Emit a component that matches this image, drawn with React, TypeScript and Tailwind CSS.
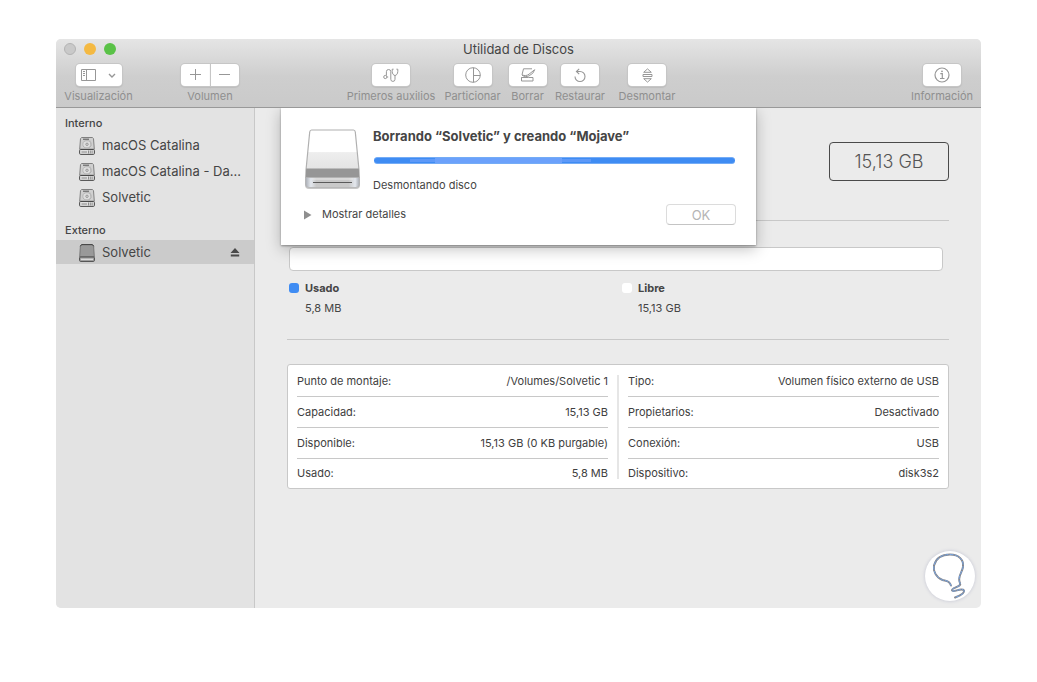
import React from "react";

type ToolProps = { id: string; label: string; width: string; children: React.ReactNode };

const buttonFace =
  "flex h-[22px] items-center justify-center bg-white text-[#979797] shadow-[0_0_0_1px_#c6c6c6,0_1px_1px_1px_#bdbdbd]";

function Tool({ id, label, width, children }: ToolProps) {
  return (
    <div className={`flex flex-col items-center ${width}`}>
      <button type="button" aria-labelledby={id} className={`${buttonFace} w-[38px] rounded`}>
        {children}
      </button>
      <ToolLabel id={id}>{label}</ToolLabel>
    </div>
  );
}

function ToolLabel({ id, children }: { id: string; children: React.ReactNode }) {
  return (
    <span id={id} className="mt-[3px] whitespace-nowrap text-[11px] leading-[14px] text-[#8f8f8f]">
      {children}
    </span>
  );
}

function InternalDisk() {
  return (
    <svg width="16" height="18" viewBox="0 0 16 18" fill="none" className="shrink-0" aria-hidden="true">
      <path d="M2.5.5h11l1 1.2.8 10.5H.7L1.5 1.7z" fill="#d0d0d0" stroke="#808080" />
      <path d="M4 2.2h6" stroke="#555" />
      <ellipse cx="8" cy="7.3" rx="4.2" ry="3.6" fill="#dedede" stroke="#b4b4b4" />
      <circle cx="8" cy="7.3" r="1.2" fill="#ddd" stroke="#888" strokeWidth=".8" />
      <path d="M11 3.5 12 9 9.5 10.6" stroke="#b4b4b4" strokeWidth=".8" />
      <rect x=".6" y="12.500" width="14.8" height="4.900" rx="1" fill="#e0e0e0" stroke="#4a4a4a" />
      <path d="M2.500 15h5.500M9.5 13.500v3M11.3 13.500v3M13.1 13.500v3" stroke="#777" strokeWidth=".8" />
    </svg>
  );
}

function ExternalDisk() {
  return (
    <svg width="16" height="18" viewBox="0 0 16 18" fill="none" className="shrink-0" aria-hidden="true">
      <path d="M2.6.6h10.8l1.2 1.4.7 11H.7l.7-11z" fill="#999" stroke="#777" />
      <path d="M1.3 2.2 2.6.6h10.8l1.3 1.6" stroke="#444" />
      <rect x=".6" y="13" width="14.8" height="4.4" rx="1" fill="#a8a8a8" stroke="#4a4a4a" />
      <path d="M2 15.3h12" stroke="#e6e6e6" />
    </svg>
  );
}

function LargeDisk() {
  return (
    <svg width="58" height="62" viewBox="0 0 58 62" fill="none" className="shrink-0" aria-hidden="true">
      <defs>
        <linearGradient id="base" x1="0" x2="1" y1="0" y2="0">
          <stop offset="0" stopColor="#a7abb2" />
          <stop offset=".1" stopColor="#e4e8ee" />
          <stop offset=".2" stopColor="#c9c9c9" />
          <stop offset=".8" stopColor="#c9c9c9" />
          <stop offset=".92" stopColor="#e4e8ee" />
          <stop offset="1" stopColor="#a7abb2" />
        </linearGradient>
        <linearGradient id="top" x1="0" x2="0" y1="0" y2="1">
          <stop offset=".45" stopColor="#fff" />
          <stop offset=".47" stopColor="#eeeeee" />
          <stop offset="1" stopColor="#dedede" />
        </linearGradient>
      </defs>
      <path d="M1 51h55v6q0 4-4 4H5q-4 0-4-4z" fill="#c8c8c8" />
      <path d="M7.500 2h42q1.500 0 1.800 2L55 42v8H2v-8L5.700 4Q6 2 7.500 2z" fill="url(#top)" stroke="#b0b0b0" strokeWidth="1.200" />
      <path d="M2.200 40.500h52.600l.7 9.500H1.500z" fill="#969696" />
      <path d="M1.500 49.500h54v6.500q0 3.500-3.500 3.500H5q-3.500 0-3.500-3.500z" fill="url(#base)" stroke="#b4b4b4" strokeWidth=".8" />
      <path d="M8 51h41" stroke="#eaeaea" />
      <path d="M9 54.500h39" stroke="#5a5a5a" />
    </svg>
  );
}

function SidebarItem({ name }: { name: string }) {
  return (
    <li>
      <button type="button" className="flex h-[26px] w-full items-center gap-[7px] whitespace-nowrap pl-[23px] text-left text-[13px]">
        <InternalDisk />
        <span>{name}</span>
      </button>
    </li>
  );
}

function InfoTable({ label, rows }: { label: string; rows: [string, string][] }) {
  return (
    <table aria-label={label} className="w-full border-separate border-spacing-0 text-[11px] text-[#404040]">
      <tbody>
        {rows.map(([name, value], i) => {
          const cell = i < rows.length - 1 ? "h-[31px] border-b border-[#c8c8c8] p-0" : "h-[29px] p-0";
          return (
            <tr key={name}>
              <th scope="row" className={`${cell} text-left font-normal`}>{name}</th>
              <td className={`${cell} text-right`}>{value}</td>
            </tr>
          );
        })}
      </tbody>
    </table>
  );
}

export default function App() {
  return (
    <div className="min-h-screen bg-white px-14 pb-[74px] pt-[39px] font-['Inter',sans-serif] text-[#454545]">
      <div className="relative flex min-h-[569px] flex-col overflow-hidden rounded-[5px] bg-[#ebebeb]">
        <header className="h-[69px] border-b border-[#999] bg-linear-to-b from-[#e5e5e5] via-[#cecece] via-55% to-[#cacaca]">
          <div className="grid h-[25px] grid-cols-[1fr_auto_1fr] items-start px-2 pt-1">
            <div className="flex gap-2">
              <button type="button" aria-label="Cerrar" className="size-3 rounded-full border border-[#b3b3b3] bg-[#c9c9c9]" />
              <button type="button" aria-label="Minimizar" className="size-3 rounded-full bg-[#f4b942]" />
              <button type="button" aria-label="Ampliar" className="size-3 rounded-full bg-[#5ac247]" />
            </div>
            <h1 className="text-[13px] leading-[13px]">Utilidad de Discos</h1>
          </div>
          <div className="flex items-start px-2">
            <div className="flex w-[69px] flex-col items-center">
              <button type="button" aria-labelledby="t-view" className={`${buttonFace} w-[46px] gap-3 rounded`}>
                <svg width="15" height="12" viewBox="0 0 15 12" fill="none" stroke="currentColor" aria-hidden="true">
                  <path d="M.5.5h14v11H.5zM5.500.5v11M2 2.500h2M2 4.500h2M2 6.500h2" />
                </svg>
                <svg width="8" height="5" viewBox="0 0 8 5" fill="none" stroke="currentColor" strokeWidth="1.400" aria-hidden="true">
                  <path d="m1 1 3 3 3-3" />
                </svg>
              </button>
              <ToolLabel id="t-view">Visualización</ToolLabel>
            </div>
            <div className="ml-[47px] flex w-[60px] flex-col items-center">
              <div role="group" aria-labelledby="t-volume" className="flex w-[58px] gap-px">
                <button type="button" aria-label="Añadir volumen" className={`${buttonFace} flex-1 rounded-l`}>
                  <svg width="12" height="12" viewBox="0 0 12 12" fill="none" stroke="currentColor" aria-hidden="true">
                    <path d="M1 5.500h11M6.500 0v11" />
                  </svg>
                </button>
                <button type="button" aria-label="Eliminar volumen" className={`${buttonFace} flex-1 rounded-r`}>
                  <svg width="12" height="12" viewBox="0 0 12 12" fill="none" stroke="currentColor" aria-hidden="true">
                    <path d="M0 5.500h11" />
                  </svg>
                </button>
              </div>
              <ToolLabel id="t-volume">Volumen</ToolLabel>
            </div>
            <div className="ml-[106px] flex gap-2">
              <Tool id="t-aid" label="Primeros auxilios" width="w-[90px]">
                <svg width="16" height="15" viewBox="0 0 16 15" fill="none" stroke="currentColor" strokeWidth="1" aria-hidden="true">
                  <circle cx="2.300" cy="9" r="1.600" />
                  <path d="M3.900 9h1.300M3.400 7.600V3.700a2.200 2.200 0 0 1 4.400 0v7.600a2.100 2.100 0 0 0 4.200 0V7.500M10.600 1.200H9.200v2.300c0 2.300 1.500 4 2.800 4s2.800-1.700 2.800-4V1.200h-1.400" />
                </svg>
              </Tool>
              <Tool id="t-partition" label="Particionar" width="w-[57px]">
                <svg width="16" height="16" viewBox="0 0 16 16" fill="none" stroke="currentColor" aria-hidden="true">
                  <circle cx="8" cy="8" r="7.300" />
                  <path d="M8.500.7v14.600M8 8.500h7.300" />
                </svg>
              </Tool>
              <Tool id="t-erase" label="Borrar" width="w-[37px]">
                <svg width="16" height="14" viewBox="0 0 16 14" fill="none" stroke="currentColor" aria-hidden="true">
                  <path d="M12 .8H3.500L2 6.800c2.500 1.200 5 1 7-.6l5.500-4.400M14.800 1.600l-2 3.600-3.600 2.600c-2.400 1.300-5 1-7.200-.6" />
                  <path d="M1.500 9.500h4M8.500 9.500h4.500v3.500H1.500V9.500h7" />
                </svg>
              </Tool>
              <Tool id="t-restore" label="Restaurar" width="w-[52px]">
                <svg width="14" height="15" viewBox="0 0 14 15" fill="none" stroke="currentColor" strokeWidth="1.100" aria-hidden="true">
                  <path d="M2 8.500a5 5 0 1 0 5-5H3.500M6.200.8 3.400 3.500l2.800 2.700" />
                </svg>
              </Tool>
              <Tool id="t-unmount" label="Desmontar" width="w-[66px]">
                <svg width="11" height="15" viewBox="0 0 11 15" fill="none" stroke="currentColor" aria-hidden="true">
                  <path d="M1.700 4.300 5.500.9l3.800 3.400zM1.700 10.700l3.800 3.400 3.800-3.400zM1 6.500h9v2H1z" />
                </svg>
              </Tool>
            </div>
            <div className="ml-auto">
              <Tool id="t-info" label="Información" width="w-[62px]">
                <svg width="16" height="16" viewBox="0 0 16 16" fill="none" stroke="currentColor" strokeWidth="1.200" aria-hidden="true">
                  <circle cx="8" cy="8" r="7" />
                  <path d="M6.300 6.700h2v4.800M6 11.500h4.500" />
                  <circle cx="8" cy="4.300" r=".9" fill="currentColor" stroke="none" />
                </svg>
              </Tool>
            </div>
          </div>
        </header>

        <div className="relative flex flex-1">
          <nav aria-label="Discos" className="w-[199px] shrink-0 border-r border-[#c8c8c8] bg-[#e3e3e3] pt-1.5">
            <h2 className="pl-[9px] text-[11px] font-medium leading-[18px]">Interno</h2>
            <ul className="pt-px">
              <SidebarItem name="macOS Catalina" />
              <SidebarItem name="macOS Catalina - Da..." />
              <SidebarItem name="Solvetic" />
            </ul>
            <h2 className="mb-px mt-2.5 pl-[9px] text-[11px] font-medium leading-[18px]">Externo</h2>
            <div className="flex h-6 items-center bg-[#cbcbcb] pl-[23px] pr-[14px] pt-px">
              <button type="button" aria-current="true" className="flex flex-1 items-center gap-[7px] text-left text-[13px]">
                <ExternalDisk />
                Solvetic
              </button>
              <button type="button" aria-label="Expulsar Solvetic">
                <svg width="10" height="9" viewBox="0 0 10 9" fill="#4a4a4a" aria-hidden="true">
                  <path d="M5 0l4.500 5h-9zM.8 6.500h8.400V8.500H.8z" />
                </svg>
              </button>
            </div>
          </nav>

          <main className="min-w-0 flex-1 px-8">
            <div className="flex justify-end border-b border-[#c8c8c8] pb-[39px] pt-[34px]">
              <div className="flex h-[39px] w-[120px] items-center justify-center rounded border border-[#4a4a4a] text-[18px] font-light text-[#555]">
                15,13 GB
              </div>
            </div>
            <div className="ml-0.5 mr-1.5 mt-[26px] h-6 rounded border border-[#c8c8c8] bg-white" />
            <dl className="ml-0.5 mr-[-6px] mt-[7px] grid grid-cols-2 text-[11px] leading-5">
              <div>
                <dt className="flex items-center gap-1.5 font-bold">
                  <span className="size-2.5 rounded-[3px] bg-[#3f8cf3]" />
                  Usado
                </dt>
                <dd className="pl-4">5,8 MB</dd>
              </div>
              <div>
                <dt className="flex items-center gap-1.5 font-bold">
                  <span className="size-2.5 rounded-[3px] bg-white" />
                  Libre
                </dt>
                <dd className="pl-4">15,13 GB</dd>
              </div>
            </dl>
            <hr className="mt-[21px] border-[#c8c8c8]" />
            <div className="mt-6 grid grid-cols-[1fr_2px_1fr] gap-x-[9px] rounded-[3px] border border-[#c8c8c8] bg-white px-[9px] pt-px">
              <InfoTable
                label="Volumen"
                rows={[
                  ["Punto de montaje:", "/Volumes/Solvetic 1"],
                  ["Capacidad:", "15,13 GB"],
                  ["Disponible:", "15,13 GB (0 KB purgable)"],
                  ["Usado:", "5,8 MB"],
                ]}
              />
              <div className="my-[9px] bg-[#e6e6e6]" />
              <InfoTable
                label="Dispositivo"
                rows={[
                  ["Tipo:", "Volumen físico externo de USB"],
                  ["Propietarios:", "Desactivado"],
                  ["Conexión:", "USB"],
                  ["Dispositivo:", "disk3s2"],
                ]}
              />
            </div>
          </main>

          <div
            role="dialog"
            aria-labelledby="sheet-title"
            className="absolute inset-x-0 top-0 mx-auto flex h-[137px] w-[475px] flex-col bg-white pl-[23px] pr-5 pt-5 shadow-[0_1px_2px_rgba(0,0,0,0.35),0_4px_14px_rgba(0,0,0,0.25)] [clip-path:inset(0_-24px_-24px_-24px)]"
          >
            <div className="flex gap-[11px]">
              <LargeDisk />
              <div className="flex-1">
                <h2 id="sheet-title" className="whitespace-nowrap text-[13px] font-bold leading-4">
                  Borrando “Solvetic” y creando “Mojave”
                </h2>
                <div
                  role="progressbar"
                  aria-label="Progreso"
                  className="mx-px mt-[13px] flex h-[7px] items-center overflow-hidden rounded-full border-y border-[#74acf6] bg-[#3f8cf3]"
                >
                  <div className="ml-[10%] h-[3px] w-[7%] bg-[#5d99f8]" />
                  <div className="h-full w-[35%] bg-[#6ba1fb]" />
                  <div className="h-[3px] w-[8%] bg-[#5d99f8]" />
                </div>
                <p className="mt-[13px] text-[11px] leading-4">Desmontando disco</p>
              </div>
            </div>
            <div className="mt-[11px] flex h-[21px] items-center justify-between">
              <button type="button" aria-expanded="false" className="flex items-center gap-[10px] text-[11px]">
                <svg width="8" height="10" viewBox="0 0 8 10" fill="#8f8f8f" aria-hidden="true">
                  <path d="M0 0.500 7.500 5 0 9.500z" />
                </svg>
                Mostrar detalles
              </button>
              <button
                type="button"
                disabled
                className="h-[21px] w-[70px] rounded border border-[#dcdcdc] border-b-[#c4c4c4] bg-white text-[13px] leading-4 text-[#b5b5b5]"
              >
                OK
              </button>
            </div>
          </div>
        </div>

        <a
          href="#ayuda"
          aria-label="Ayuda"
          className="absolute bottom-[7px] right-1.5 flex size-[50px] items-center justify-center rounded-full bg-white shadow-[0_0_3px_1px_#d3d4dc]"
        >
          <svg width="50" height="50" viewBox="0 0 50 50" fill="none" strokeLinecap="round" aria-hidden="true">
            <path
              d="M26 34.500C24 29 21 30 17.500 29C11 26.500 8 20 9 14.500C11 7 17 3.500 25 3.500C34 3.500 39 9 38 16C37 22 32 26 35 32C37 36 26 36.500 27 39.500C28 42 37 36 39 39.500C40 43 34 45 30 46.500"
              stroke="#87888e"
              strokeWidth="2"
            />
            <path
              d="M26 34.500C24 29 21 30 17.500 29C11 26.500 8 20 9 14.500C11 7 17 3.500 25 3.500C34 3.500 39 9 38 16C37 22 32 26 35 32C37 36 26 36.500 27 39.500C28 42 37 36 39 39.500C40 43 34 45 30 46.500"
              stroke="#75a5e5"
              strokeWidth="1"
              strokeDasharray="3 2"
            />
          </svg>
        </a>
      </div>
    </div>
  );
}
